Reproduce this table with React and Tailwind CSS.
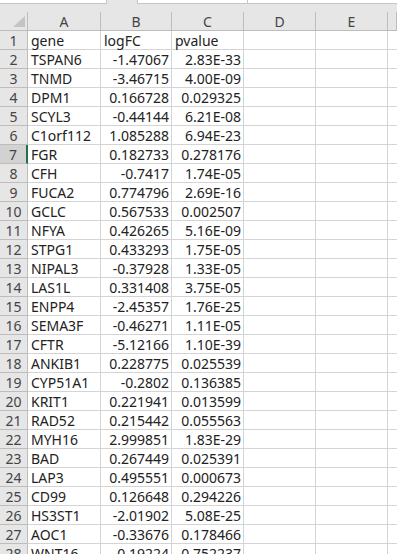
import React from "react";

const rows = [
  ["gene", "logFC", "pvalue", true],
  ["TSPAN6", "-1.47067", "2.83E-33"],
  ["TNMD", "-3.46715", "4.00E-09"],
  ["DPM1", "0.166728", "0.029325"],
  ["SCYL3", "-0.44144", "6.21E-08"],
  ["C1orf112", "1.085288", "6.94E-23"],
  ["FGR", "0.182733", "0.278176"],
  ["CFH", "-0.7417", "1.74E-05"],
  ["FUCA2", "0.774796", "2.69E-16"],
  ["GCLC", "0.567533", "0.002507"],
  ["NFYA", "0.426265", "5.16E-09"],
  ["STPG1", "0.433293", "1.75E-05"],
  ["NIPAL3", "-0.37928", "1.33E-05"],
  ["LAS1L", "0.331408", "3.75E-05"],
  ["ENPP4", "-2.45357", "1.76E-25"],
  ["SEMA3F", "-0.46271", "1.11E-05"],
  ["CFTR", "-5.12166", "1.10E-39"],
  ["ANKIB1", "0.228775", "0.025539"],
  ["CYP51A1", "-0.2802", "0.136385"],
  ["KRIT1", "0.221941", "0.013599"],
  ["RAD52", "0.215442", "0.055563"],
  ["MYH16", "2.999851", "1.83E-29"],
  ["BAD", "0.267449", "0.025391"],
  ["LAP3", "0.495551", "0.000673"],
  ["CD99", "0.126648", "0.294226"],
  ["HS3ST1", "-2.01902", "5.08E-25"],
  ["AOC1", "-0.33676", "0.178466"],
  ["WNT16", "-0.19224", "0.752237"],
];

const cols = ["A", "B", "C", "D", "E", ""];

export default function App() {
  return (
    <div
      className="w-[397px] h-[554px] overflow-hidden bg-white text-[14px] text-[#222]"
      style={{ fontFamily: '"Noto Sans", "Noto Sans CJK SC", sans-serif' }}
    >
      {/* top strip (formula bar bottom) */}
      <div className="h-[12px] bg-[#e6e6e6] flex items-start">
        <div className="w-[107px] h-[4px] bg-white border-b border-r border-[#c6c6c6]" />
        <div className="w-[30px]" />
        <div className="w-[111px] h-[4px] bg-white border-b border-l border-r border-[#c6c6c6]" />
        <div className="flex-1 h-[4px] bg-white border-b border-[#c6c6c6]" />
      </div>

      <div className="grid grid-cols-[28px_73px_71px_72px_72px_72px_1fr] auto-rows-[19px]">
        {/* header row */}
        <div className="relative bg-[#e6e6e6] border-r border-b border-[#bdbdbd]">
          <svg className="absolute right-[2px] bottom-[3px]" width="12" height="11" viewBox="0 0 12 11">
            <polygon points="12,0 12,11 0,11" fill="#c4c4c4" />
          </svg>
        </div>
        {cols.map((c, i) => (
          <div
            key={c + i}
            className="bg-[#e6e6e6] border-r border-b border-[#bdbdbd] flex items-center justify-center text-[#444] leading-none pt-[1px]"
          >
            {c}
          </div>
        ))}

        {rows.map((r, idx) => {
          const n = idx + 1;
          const sel = n === 7;
          return (
            <React.Fragment key={n}>
              <div
                className={
                  sel
                    ? "bg-[#d2d2d2] border-r-2 border-b border-r-[#217346] border-b-[#bdbdbd] flex items-center justify-center text-[#444] leading-none pt-[1px]"
                    : "bg-[#e6e6e6] border-r border-b border-[#bdbdbd] flex items-center justify-center text-[#444] leading-none pt-[1px]"
                }
              >
                {n}
              </div>
              <div className="border-r border-b border-[#d4d4d4] flex items-center px-[3px] leading-none pt-[1px] whitespace-nowrap">
                {r[0]}
              </div>
              <div
                className={
                  r[3]
                    ? "border-r border-b border-[#d4d4d4] flex items-center px-[3px] leading-none pt-[1px] whitespace-nowrap"
                    : "border-r border-b border-[#d4d4d4] flex items-center justify-end px-[2px] leading-none pt-[1px] whitespace-nowrap"
                }
              >
                {r[1]}
              </div>
              <div
                className={
                  r[3]
                    ? "border-r border-b border-[#d4d4d4] flex items-center px-[3px] leading-none pt-[1px] whitespace-nowrap"
                    : "border-r border-b border-[#d4d4d4] flex items-center justify-end px-[2px] leading-none pt-[1px] whitespace-nowrap"
                }
              >
                {r[2]}
              </div>
              <div className="border-r border-b border-[#d4d4d4]" />
              <div className="border-r border-b border-[#d4d4d4]" />
              <div className="border-b border-[#d4d4d4]" />
            </React.Fragment>
          );
        })}
      </div>
    </div>
  );
}
